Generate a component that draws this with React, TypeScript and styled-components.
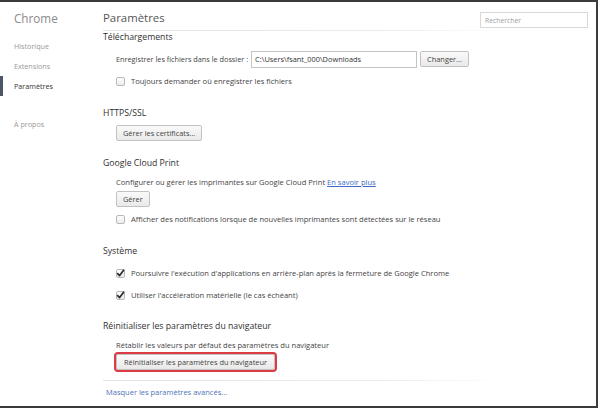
import styled, { createGlobalStyle } from "styled-components";

const font = `"Open Sans", "Noto Sans", "Liberation Sans", sans-serif`;

const GlobalStyle = createGlobalStyle`
  html, body {
    margin: 0;
    padding: 0;
    background: #ffffff;
  }
  * {
    box-sizing: border-box;
  }
  body {
    font-family: ${font};
    color: #444;
  }
`;

const Window = styled.div`
  width: 598px;
  height: 408px;
  display: flex;
  border-top: 2px solid #3b3b3b;
  border-right: 2px solid #3b3b3b;
  border-bottom: 2px solid #3b3b3b;
  background: #fff;
  overflow: hidden;
`;

const Sidebar = styled.aside`
  width: 103px;
  flex-shrink: 0;
  display: flex;
  flex-direction: column;
`;

const Brand = styled.h1`
  margin: 8px 0 0 14px;
  height: 16px;
  line-height: 16px;
  font-size: 11.7px;
  font-weight: 400;
  color: #8a8a8a;
`;

const NavList = styled.nav`
  margin-top: 10px;
  display: flex;
  flex-direction: column;
`;

const NavItem = styled.a<{ $active?: boolean; $gap?: number }>`
  height: 20px;
  line-height: 20px;
  margin-top: ${({ $gap }) => $gap ?? 0}px;
  padding-left: ${({ $active }) => ($active ? 11 : 14)}px;
  border-left: ${({ $active }) => ($active ? "3px solid #4d5666" : "none")};
  font-size: 7.2px;
  color: ${({ $active }) => ($active ? "#333" : "#999")};
  text-decoration: none;
`;

const Main = styled.main`
  flex: 1;
  display: flex;
  flex-direction: column;
  padding-right: 8px;
`;

const Header = styled.header`
  height: 28px;
  display: flex;
  justify-content: space-between;
  align-items: flex-start;
`;

const PageTitle = styled.h2`
  margin: 8px 0 0;
  height: 16px;
  line-height: 16px;
  font-size: 11.4px;
  font-weight: 400;
  color: #555;
`;

const Search = styled.input`
  margin-top: 10px;
  width: 108px;
  height: 16px;
  border: 1px solid #d9d9d9;
  padding: 0 4px;
  font-family: ${font};
  font-size: 6.8px;
  color: #444;
  outline: none;
  &::placeholder {
    color: #a0a0a0;
  }
`;

const Rule = styled.div<{ $margin?: number }>`
  height: 1px;
  margin-top: ${({ $margin }) => $margin ?? 0}px;
  width: 400px;
  background: linear-gradient(to right, #e4e4e4 0%, #ebebeb 70%, rgba(236, 236, 236, 0) 100%);
`;

const Section = styled.section<{ $first?: boolean; $gap?: number }>`
  margin-top: ${({ $first, $gap }) => ($first ? 0 : $gap ?? 15)}px;
  display: flex;
  flex-direction: column;
`;

const Heading = styled.h3`
  margin: 0;
  height: 12px;
  line-height: 12px;
  font-size: 8.7px;
  font-weight: 400;
  color: #303030;
`;

const Body = styled.div`
  margin-top: 5px;
  padding-left: 13px;
  display: flex;
  flex-direction: column;
`;

const TextRow = styled.div`
  height: 16px;
  display: flex;
  align-items: center;
  font-size: 7.55px;
  color: #444;
  white-space: nowrap;
`;

const ButtonRow = styled.div`
  height: 18px;
  display: flex;
  align-items: center;
`;

const CheckRow = styled.label`
  height: 22px;
  display: flex;
  align-items: center;
  gap: 6px;
  font-size: 7.55px;
  color: #444;
  white-space: nowrap;
`;

const FolderRow = styled.div`
  height: 22px;
  display: flex;
  align-items: center;
  font-size: 7.3px;
  color: #444;
  white-space: nowrap;
`;

const PathField = styled.div`
  margin-left: 3px;
  width: 166px;
  height: 17px;
  border: 1px solid #c4c4c4;
  padding: 0 3px;
  display: flex;
  align-items: center;
  font-size: 7.4px;
  color: #333;
`;

const Button = styled.button<{ $highlight?: boolean; $gap?: number }>`
  height: 16px;
  margin-left: ${({ $gap }) => $gap ?? 0}px;
  padding: 0 ${({ $highlight }) => ($highlight ? 7 : 6)}px;
  border: 1px solid #c2c2c2;
  border-radius: 2px;
  background: linear-gradient(#fafafa, #e9e9e9);
  font-family: ${font};
  font-size: 7.4px;
  color: #444;
  white-space: nowrap;
  outline: ${({ $highlight }) => ($highlight ? "2px solid #dc3b43" : "none")};
  outline-offset: 0px;
`;

const Box = styled.span`
  width: 9px;
  height: 9px;
  flex-shrink: 0;
  border: 1px solid #b9b9b9;
  border-radius: 2px;
  background: linear-gradient(#fdfdfd, #ececec);
  display: inline-flex;
  align-items: center;
  justify-content: center;
  overflow: visible;
`;

const Link = styled.a<{ $underline?: boolean }>`
  margin-left: ${({ $underline }) => ($underline ? 2 : 0)}px;
  color: ${({ $underline }) => ($underline ? "#3a68c4" : "#4f74b8")};
  text-decoration: ${({ $underline }) => ($underline ? "underline" : "none")};
`;

const Footer = styled.div`
  margin-top: 5px;
  padding-left: 3px;
  height: 12px;
  line-height: 12px;
  font-size: 7.5px;
`;

const Checkbox = ({ checked }: { checked?: boolean }) => (
  <Box>
    {checked && (
      <svg width="9" height="9" viewBox="0 0 9 9" style={{ overflow: "visible" }}>
        <path d="M1.6 4.6 L3.6 6.6 L7.6 1.2" fill="none" stroke="#2b2b2b" strokeWidth="1.7" strokeLinecap="round" strokeLinejoin="round" />
      </svg>
    )}
  </Box>
);

const navItems = [
  { name: "Historique" },
  { name: "Extensions" },
  { name: "Paramètres", active: true },
];

export default function App() {
  return (
    <>
      <GlobalStyle />
      <Window>
        <Sidebar>
          <Brand>Chrome</Brand>
          <NavList>
            {navItems.map((item) => (
              <NavItem key={item.name} $active={item.active}>
                {item.name}
              </NavItem>
            ))}
            <NavItem $gap={18}>À propos</NavItem>
          </NavList>
        </Sidebar>
        <Main>
          <Header>
            <PageTitle>Paramètres</PageTitle>
            <Search placeholder="Rechercher" />
          </Header>
          <Rule />

          <Section $first>
            <Heading>Téléchargements</Heading>
            <Body>
              <FolderRow>
                Enregistrer les fichiers dans le dossier :
                <PathField>C:\Users\fsant_000\Downloads</PathField>
                <Button $gap={3}>Changer...</Button>
              </FolderRow>
              <CheckRow>
                <Checkbox />
                Toujours demander où enregistrer les fichiers
              </CheckRow>
            </Body>
          </Section>

          <Section>
            <Heading>HTTPS/SSL</Heading>
            <Body>
              <ButtonRow>
                <Button>Gérer les certificats...</Button>
              </ButtonRow>
            </Body>
          </Section>

          <Section>
            <Heading>Google Cloud Print</Heading>
            <Body>
              <TextRow>
                Configurer ou gérer les imprimantes sur Google Cloud Print
                <Link $underline>En savoir plus</Link>
              </TextRow>
              <ButtonRow>
                <Button>Gérer</Button>
              </ButtonRow>
              <CheckRow>
                <Checkbox />
                Afficher des notifications lorsque de nouvelles imprimantes sont détectées sur le réseau
              </CheckRow>
            </Body>
          </Section>

          <Section>
            <Heading>Système</Heading>
            <Body>
              <CheckRow>
                <Checkbox checked />
                Poursuivre l'exécution d'applications en arrière-plan après la fermeture de Google Chrome
              </CheckRow>
              <CheckRow>
                <Checkbox checked />
                Utiliser l'accélération matérielle (le cas échéant)
              </CheckRow>
            </Body>
          </Section>

          <Section $gap={14}>
            <Heading>Réinitialiser les paramètres du navigateur</Heading>
            <Body>
              <TextRow>Rétablir les valeurs par défaut des paramètres du navigateur</TextRow>
              <ButtonRow>
                <Button $highlight>Réinitialiser les paramètres du navigateur</Button>
              </ButtonRow>
            </Body>
          </Section>

          <Rule $margin={9} />
          <Footer>
            <Link>Masquer les paramètres avancés...</Link>
          </Footer>
        </Main>
      </Window>
    </>
  );
}
